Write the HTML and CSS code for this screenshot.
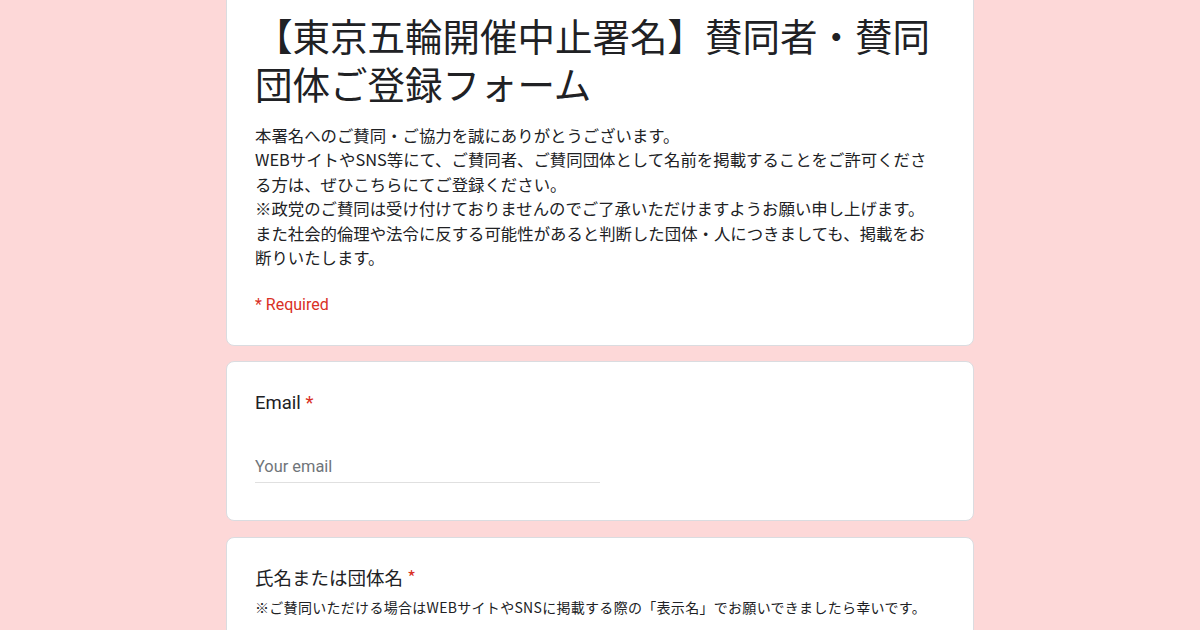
FILE: index.html
```html
<!DOCTYPE html>
<html lang="ja">
<head>
<meta charset="utf-8">
<title>【東京五輪開催中止署名】賛同者・賛同団体ご登録フォーム</title>
<link rel="stylesheet" href="styles.css">
</head>
<body>
<main class="form">
  <section class="card card-head">
    <h1 class="title">【東京五輪開催中止署名】賛同者・賛同<br>団体ご登録フォーム</h1>
    <p class="desc">本署名へのご賛同・ご協力を誠にありがとうございます。<br>WEBサイトやSNS等にて、ご賛同者、ご賛同団体として名前を掲載することをご許可くださ<br>る方は、ぜひこちらにてご登録ください。<br>※政党のご賛同は受け付けておりませんのでご了承いただけますようお願い申し上げます。<br>また社会的倫理や法令に反する可能性があると判断した団体・人につきましても、掲載をお<br>断りいたします。</p>
    <div class="required">* Required</div>
  </section>

  <section class="card">
    <div class="label">Email <span class="star">*</span></div>
    <div class="input">Your email</div>
  </section>

  <section class="card card-name">
    <div class="label label-jp">氏名または団体名 <span class="star">*</span></div>
    <div class="help">※ご賛同いただける場合はWEBサイトやSNSに掲載する際の「表示名」でお願いできましたら幸いです。</div>
    <div class="input input-gap">Your answer</div>
  </section>
</main>
</body>
</html>
```

FILE: styles.css
```css
html, body {
  margin: 0;
  padding: 0;
  background: #fdd8d8;
  height: 630px;
  overflow: hidden;
}

body {
  font-family: Roboto, "Noto Sans CJK JP", sans-serif;
  color: #202124;
}

.form {
  width: 748px;
  margin: 0 auto;
  display: flex;
  flex-direction: column;
  gap: 15px;
}

.card {
  box-sizing: border-box;
  background: #ffffff;
  border: 1px solid #dadce0;
  border-radius: 8px;
  padding: 28px;
}

.card-head {
  margin-top: -18px;
}

.card-name {
  margin-top: 1px;
}

.title {
  margin: 0;
  font-family: "Noto Sans CJK JP", sans-serif;
  font-weight: 400;
  font-size: 37.5px;
  line-height: 48px;
  color: #202124;
  white-space: nowrap;
}

.desc {
  margin: 16px 0 0 0;
  font-family: "Noto Sans CJK JP", sans-serif;
  font-size: 16.4px;
  line-height: 24.4px;
  color: #202124;
  white-space: nowrap;
}

.required {
  margin-top: 23px;
  font-family: Roboto, sans-serif;
  font-size: 16px;
  line-height: 25px;
  color: #d93025;
}

.label {
  font-family: Roboto, "Noto Sans CJK JP", sans-serif;
  font-size: 18.5px;
  line-height: 26px;
  color: #202124;
}

.label-jp {
  font-family: "Noto Sans CJK JP", sans-serif;
  line-height: 23px;
}

.star {
  color: #d93025;
}

.input {
  width: 50%;
  margin-top: 39px;
  margin-bottom: 9px;
  padding-bottom: 3px;
  border-bottom: 1px solid #e0e0e0;
  font-family: Roboto, sans-serif;
  font-size: 16.4px;
  line-height: 24px;
  color: #70757a;
}

.help {
  margin-top: 8px;
  font-family: "Noto Sans CJK JP", sans-serif;
  font-size: 14px;
  letter-spacing: 0.3px;
  line-height: 20px;
  color: #202124;
  white-space: nowrap;
}

.input-gap {
  margin-top: 44px;
}
```
